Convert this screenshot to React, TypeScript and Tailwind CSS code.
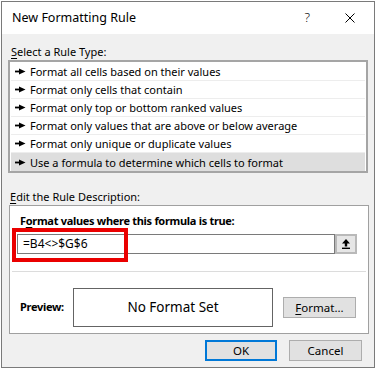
import React from "react";

const rules = [
  "Format all cells based on their values",
  "Format only cells that contain",
  "Format only top or bottom ranked values",
  "Format only values that are above or below average",
  "Format only unique or duplicate values",
  "Use a formula to determine which cells to format",
];

function Bullet() {
  return (
    <svg width="11" height="7" viewBox="0 0 11 7" className="shrink-0">
      <rect x="0" y="2.6" width="5" height="1.8" fill="#000" />
      <path d="M4 0.5 L10.5 3.5 L4 6.5 Z" fill="#000" />
    </svg>
  );
}

function CloseIcon() {
  return (
    <svg width="10" height="10" viewBox="0 0 10 10">
      <path d="M0.5 0.5 L9.5 9.5 M9.5 0.5 L0.5 9.5" stroke="#000" strokeWidth="1" />
    </svg>
  );
}

function CollapseIcon() {
  return (
    <svg width="8" height="10" viewBox="0 0 8 10">
      <path d="M4 0 L8 4.5 L5.2 4.5 L5.2 7.5 L2.8 7.5 L2.8 4.5 L0 4.5 Z" fill="#000" />
      <rect x="0" y="8.6" width="8" height="1.4" fill="#000" />
    </svg>
  );
}

export default function App() {
  return (
    <div className="h-[373px] w-[382px] bg-white pl-px pt-px font-['Segoe_UI','Noto_Sans',sans-serif] text-[11px] text-black">
      <div className="flex h-[367px] w-[374px] flex-col border border-[#7a7a7a] bg-[#f0f0f0]">
        {/* title bar */}
        <div className="flex h-[32px] shrink-0 items-center bg-white pl-[10px]">
          <span className="text-[12.5px]">New Formatting Rule</span>
          <span className="ml-auto mr-[35px] text-[13px] font-light">?</span>
          <span className="mr-[19px] flex">
            <CloseIcon />
          </span>
        </div>

        <div className="flex flex-col pl-[6px]">
          <p className="mt-[10px] pl-[3px] leading-[16px]">
            <span className="underline underline-offset-2">S</span>elect a Rule Type:
          </p>

          <div className="w-[360px] border-2 border-[#a5a5a5] bg-white px-px pt-px">
            {rules.map((rule, i) => (
              <div
                key={rule}
                className={`flex h-[18px] items-center gap-[4px] border-b border-[#ededed] pl-[4px] ${
                  i === rules.length - 1 ? "border-b-0 bg-[#dedede]" : ""
                }`}
              >
                <Bullet />
                <span className="leading-none">{rule}</span>
              </div>
            ))}
          </div>

          <p className="mt-[16px] pl-[2px] leading-[16px]">
            <span className="underline underline-offset-2">E</span>dit the Rule Description:
          </p>

          <div className="ml-px flex h-[129px] w-[360px] flex-col border border-[#a0a0a0] bg-white">
            <p className="mt-[7px] pl-[10px] text-[11px] font-bold leading-[16px] tracking-[-0.3px]">
              F<span className="underline underline-offset-2">o</span>rmat values where this formula is true:
            </p>

            <div className="relative ml-[7px] mt-[5px] flex h-[20px] w-[340px]">
              <div className="flex flex-1 items-center border border-[#7a7a7a] pl-[5px] text-[12px]">
                =B4&lt;&gt;$G$6
              </div>
              <div className="flex w-[22px] items-center justify-center border-2 border-[#b9b9b9] bg-[#e6e6e6]">
                <CollapseIcon />
              </div>
              <div className="pointer-events-none absolute left-[-5px] top-[-6px] h-[34px] w-[116px] border-4 border-[#ea0000]" />
            </div>

            <div className="mx-[2px] mt-[17px] h-px bg-[#dcdcdc]" />

            <div className="mt-[16px] flex items-center pl-[10px]">
              <span className="w-[53px] text-[11px] font-bold tracking-[-0.3px]">Preview:</span>
              <div className="flex h-[39px] w-[200px] items-center justify-center border border-[#646464] text-[13.5px]">
                No Format Set
              </div>
              <button className="ml-[10px] h-[21px] w-[73px] border border-[#adadad] bg-[#e1e1e1] text-[11.5px]">
                <span className="underline underline-offset-2">F</span>ormat...
              </button>
            </div>
          </div>

          <div className="mt-[6px] flex text-[11.5px]">
            <button className="ml-[197px] h-[21px] w-[72px] border-2 border-[#0078d7] bg-[#e1e1e1]">
              OK
            </button>
            <button className="ml-[12px] h-[21px] w-[73px] border border-[#adadad] bg-[#e1e1e1]">
              Cancel
            </button>
          </div>
        </div>
      </div>
    </div>
  );
}
